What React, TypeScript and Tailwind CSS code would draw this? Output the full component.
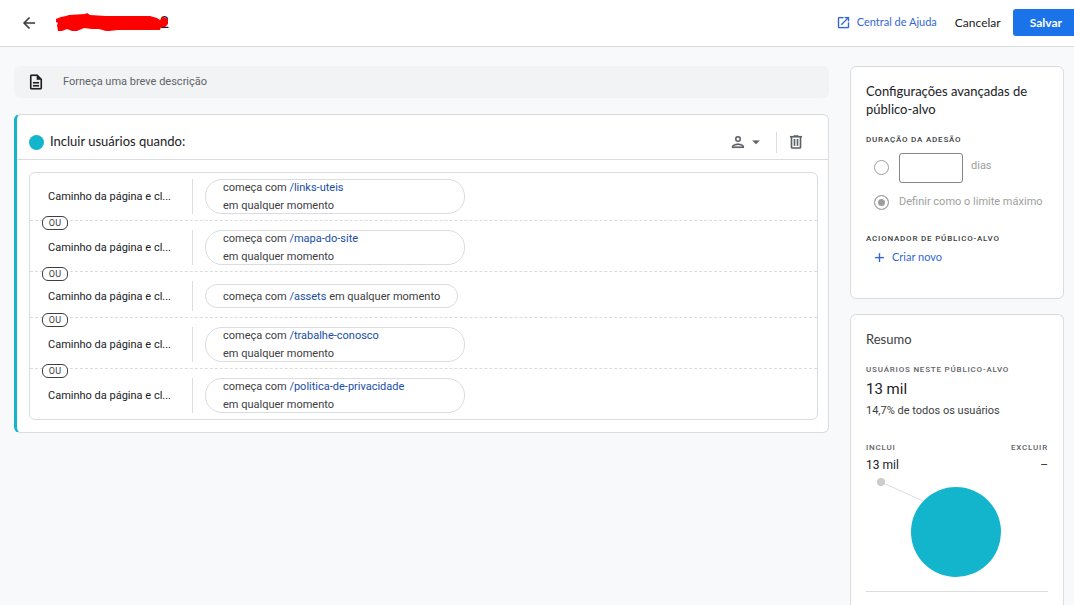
import type { ReactNode } from "react";

interface Condition {
  path: string;
}

const CONDITIONS: Condition[] = [
  { path: "/links-uteis" },
  { path: "/mapa-do-site" },
  { path: "/assets" },
  { path: "/trabalhe-conosco" },
  { path: "/politica-de-privacidade" },
];

const ICONS = {
  back: "M20 11H7.83l5.59-5.59L12 4l-8 8 8 8 1.41-1.41L7.83 13H20v-2z",
  openInNew:
    "M19 19H5V5h7V3H5a2 2 0 0 0-2 2v14a2 2 0 0 0 2 2h14c1.1 0 2-.9 2-2v-7h-2v7zM14 3v2h3.59l-9.83 9.83 1.41 1.41L19 6.41V10h2V3h-7z",
  description:
    "M8 16h8v2H8zm0-4h8v2H8zm6-10H6c-1.1 0-2 .9-2 2v16c0 1.1.89 2 1.99 2H18c1.1 0 2-.9 2-2V8l-6-6zm4 18H6V4h7v5h5v11z",
  person:
    "M12 4a4 4 0 1 0 0 8 4 4 0 0 0 0-8zm0 6a2 2 0 1 1 0-4 2 2 0 0 1 0 4zm0 4c-2.67 0-8 1.34-8 4v2h16v-2c0-2.66-5.33-4-8-4zm-6 4c.22-.72 3.31-2 6-2 2.7 0 5.8 1.29 6 2H6z",
  dropDown: "M7 10l5 5 5-5z",
  trash:
    "M15 4V3H9v1H4v2h1v13c0 1.1.9 2 2 2h10c1.1 0 2-.9 2-2V6h1V4h-5zm2 15H7V6h10v13zM9 8h2v9H9zm4 0h2v9h-2z",
  plus: "M19 13h-6v6h-2v-6H5v-2h6V5h2v6h6v2z",
};

interface IconProps {
  name: keyof typeof ICONS;
  className?: string;
}

const Icon = ({ name, className = "size-[18px]" }: IconProps) => (
  <svg
    viewBox="0 0 24 24"
    fill="currentColor"
    stroke="currentColor"
    strokeWidth="0.2"
    className={`shrink-0 ${className}`}
    aria-hidden="true"
  >
    <path d={ICONS[name]} />
  </svg>
);

const Overline = ({ children }: { children: ReactNode }) => (
  <h3 className="text-[8px] leading-3 font-medium tracking-widest uppercase">
    {children}
  </h3>
);

const Header = () => (
  <header className="flex h-[47px] items-center border-b border-[#dadce0] bg-white pl-5 pb-px">
    <button type="button" aria-label="Voltar" className="text-[#3c4043]">
      <Icon name="back" />
    </button>
    <h1 className="relative ml-[18px] flex h-6 w-[113px] items-center justify-end text-base text-[#202124]">
      2
      <svg
        viewBox="0 0 114 24"
        className="absolute inset-0 h-6 w-[114px]"
        aria-hidden="true"
      >
        <path
          d="M0 8L5 6 10 5 13 4 29 3 31 2 34 4 50 5 94 5 101 7 104 9 107 6 110 7 112 9 112 13 109 16 105 16 104 19 96 19 88 19 62 19 53 20 50 20 43 18 36 18 28 17 21 20 16 20 11 18 6 20 2 20 1 14 2 12 0 11Z"
          fill="#ff0000"
        />
      </svg>
    </h1>
    <div className="ml-auto flex items-center font-['Lato',sans-serif] text-xs">
      <a
        href="#ajuda"
        className="flex items-center gap-1.5 text-[11px] text-[#3367d6]"
      >
        <Icon name="openInNew" className="size-[15px]" />
        Central de Ajuda
      </a>
      <button type="button" className="ml-[18px] text-[#202124]">
        Cancelar
      </button>
      <button
        type="button"
        className="ml-3 h-[27px] rounded-l-[3px] bg-[#1a73e8] pr-3 pl-[17px] font-bold text-white"
      >
        Salvar
      </button>
    </div>
  </header>
);

const ConditionRow = ({ path }: Condition) => (
  <li className="group relative flex items-center border-dashed border-[#dadce0] pt-[9px] pb-1.5 text-[11px] first:pt-1.5 not-last:border-b">
    <span className="w-[162px] shrink-0 pt-0.5 pl-[18px] text-[#202124]">
      Caminho da página e cl...
    </span>
    <div className="flex min-h-[30px] items-center border-l border-[#dadce0] pl-3">
      <div className="flex min-h-6 max-w-[260px] items-center rounded-[17px] border border-[#dadce0] px-[17px] text-[#3c4043]">
        <p className="-mt-px -mb-0.5 leading-[18px]">
          começa com{" "}
          <a href={`#${path}`} className="text-[#174ea6]">
            {path}
          </a>{" "}
          <span className="whitespace-nowrap">em qualquer momento</span>
        </p>
      </div>
    </div>
    <span className="absolute -bottom-2.5 left-3 z-10 flex h-3.5 w-[26px] items-center justify-center rounded-md border border-[#3c4043] bg-white pt-px text-[9px] tracking-wide text-[#3c4043] group-last:hidden">
      OU
    </span>
  </li>
);

const IncludeCard = () => (
  <section className="mt-4 rounded-md border border-l-[3px] border-[#dadce0] border-l-[#12b5cb] bg-white">
    <div className="flex h-[45px] items-center border-b border-[#dadce0] pt-2.5 pr-[23px] pl-3">
      <span className="size-[15px] rounded-full bg-[#12b5cb]" />
      <h2 className="ml-1.5 font-['Lato',sans-serif] text-[13px] text-[#202124]">
        Incluir usuários quando:
      </h2>
      <div className="ml-auto flex items-center text-[#5f6368]">
        <button type="button" aria-label="Escopo" className="flex">
          <Icon name="person" />
          <Icon name="dropDown" />
        </button>
        <span className="mr-2.5 ml-[11px] h-[21px] w-px bg-[#dadce0]" />
        <button type="button" aria-label="Excluir grupo">
          <Icon name="trash" />
        </button>
      </div>
    </div>
    <ul className="mt-3 mr-2.5 mb-3 ml-3 rounded-md border border-[#dadce0]">
      {CONDITIONS.map((condition) => (
        <ConditionRow key={condition.path} path={condition.path} />
      ))}
    </ul>
  </section>
);

const radioClass =
  "size-[15px] shrink-0 appearance-none rounded-full border border-[#9e9e9e] checked:bg-[#9e9e9e] checked:shadow-[inset_0_0_0_3px_white]";

const SettingsCard = () => (
  <section className="rounded-md border border-[#dadce0] bg-white px-[15px] pt-[15px] pb-8">
    <h2 className="font-['Lato',sans-serif] text-[13px] leading-[18px] text-[#202124]">
      Configurações avançadas de público-alvo
    </h2>
    <div className="mt-4 text-[#3c4043]">
      <Overline>Duração da adesão</Overline>
    </div>
    <div className="mt-[7px] flex items-center pl-2 text-[11px] text-[#9e9e9e]">
      <input
        type="radio"
        name="duration"
        aria-label="Duração em dias"
        className={`mb-0.5 ${radioClass}`}
      />
      <input
        id="days"
        type="text"
        className="ml-2.5 h-[30px] w-16 rounded-[3px] border border-[#80868b] px-2"
      />
      <label htmlFor="days" className="ml-2 pb-1">
        dias
      </label>
    </div>
    <label className="mt-2.5 flex items-center gap-2.5 pl-2 text-[11px] leading-[18px] text-[#9e9e9e]">
      <input
        type="radio"
        name="duration"
        defaultChecked
        className={radioClass}
      />
      Definir como o limite máximo
    </label>
    <div className="mt-[22px] text-[#3c4043]">
      <Overline>Acionador de público-alvo</Overline>
    </div>
    <button
      type="button"
      className="mt-[3px] ml-1.5 flex items-center gap-[5px] font-['Lato',sans-serif] text-[11px] leading-[18px] text-[#3367d6]"
    >
      <Icon name="plus" className="size-[15px]" />
      Criar novo
    </button>
  </section>
);

const SummaryCard = () => (
  <section className="mt-[15px] flex-1 rounded-t-md border border-b-0 border-[#dadce0] bg-white px-[15px] pt-[15px] text-[#5f6368]">
    <h2 className="font-['Lato',sans-serif] text-[13px] leading-[18px] text-[#3c4043]">
      Resumo
    </h2>
    <div className="mt-4">
      <Overline>Usuários neste público-alvo</Overline>
    </div>
    <p className="mt-[3px] text-[15px] leading-5 text-[#202124]">13 mil</p>
    <p className="mt-1 text-[11px] leading-4 text-[#3c4043]">
      14,7% de todos os usuários
    </p>
    <div className="mt-[23px] flex justify-between">
      <div>
        <Overline>Inclui</Overline>
        <p className="mt-0.5 text-xs leading-[18px] text-[#202124]">13 mil</p>
      </div>
      <div className="text-right">
        <Overline>Excluir</Overline>
        <p className="mt-0.5 text-xs leading-[18px] text-[#3c4043]">–</p>
      </div>
    </div>
    <svg
      viewBox="0 0 182 117"
      className="w-full border-b border-[#dadce0]"
      role="img"
      aria-label="13 mil usuários incluídos"
    >
      <path d="M15 8L57 27" stroke="#dadce0" />
      <circle cx="15" cy="8" r="4" fill="#cccccc" />
      <circle cx="90" cy="58" r="45" fill="#12b5cb" />
    </svg>
  </section>
);

const App = () => (
  <div className="flex min-h-screen flex-col bg-[#f8f9fb] font-['Roboto',sans-serif]">
    <Header />
    <div className="flex flex-1 gap-[21px] pt-[19px] pr-2.5 pl-3.5">
      <main className="min-w-0 flex-1">
        <label className="flex h-8 items-center rounded-md bg-[#f1f3f4] pl-[13px] text-[#202124]">
          <Icon name="description" />
          <input
            type="text"
            aria-label="Descrição"
            placeholder="Forneça uma breve descrição"
            className="ml-[18px] flex-1 bg-transparent text-[11px] outline-none placeholder:text-[#5f6368]"
          />
        </label>
        <IncludeCard />
      </main>
      <aside className="flex w-[214px] shrink-0 flex-col">
        <SettingsCard />
        <SummaryCard />
      </aside>
    </div>
  </div>
);

export default App;
